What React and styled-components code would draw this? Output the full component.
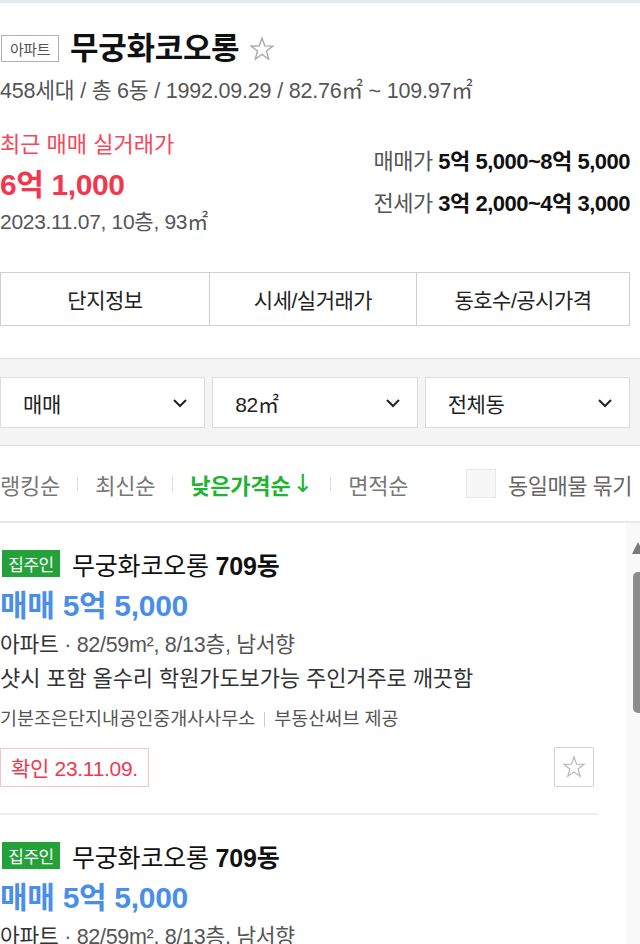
import React from 'react';
import styled, { createGlobalStyle } from 'styled-components';

const GlobalStyle = createGlobalStyle`
  html, body {
    margin: 0;
    padding: 0;
    overflow: hidden;
    background: #fff;
  }
  body {
    font-family: "Liberation Sans", "Noto Sans CJK KR", sans-serif;
    color: #222;
  }
  * { box-sizing: border-box; }
`;

const Page = styled.div`
  height: 944px;
  display: flex;
  flex-direction: column;
  overflow: hidden;
`;

const TopLine = styled.div`
  height: 3px;
  background: #e6e9ed;
  flex-shrink: 0;
`;

const Summary = styled.section`
  padding: 32px 10px 0 0;
  flex-shrink: 0;
`;

const TitleRow = styled.div`
  display: flex;
  align-items: center;
  height: 27px;
`;

const TypeBadge = styled.span`
  display: inline-flex;
  align-items: center;
  justify-content: center;
  height: 27px;
  width: 58px;
  margin-left: 1px;
  border: 1px solid #b0b0b0;
  font-size: 15px;
  color: #555;
  letter-spacing: -0.5px;
`;

const Title = styled.h1`
  margin: 0 0 0 11px;
  font-size: 31px;
  line-height: 34px;
  font-weight: 700;
  color: #111;
  letter-spacing: -0.3px;
`;

const StarButton = styled.span`
  display: inline-flex;
  margin-left: 10px;
  color: #aaa;
`;

const Meta = styled.p`
  margin: 17px 0 0;
  font-size: 21.5px;
  line-height: 24px;
  color: #555;
  letter-spacing: -0.2px;
`;

const PriceRow = styled.div`
  display: flex;
  justify-content: space-between;
  margin-top: 30px;
`;

const Recent = styled.div`
  display: flex;
  flex-direction: column;
`;

const RecentLabel = styled.span`
  font-size: 22px;
  line-height: 24px;
  color: #f5475c;
`;

const RecentPrice = styled.span`
  margin-top: 12px;
  font-size: 30px;
  line-height: 32px;
  font-weight: 700;
  color: #f0394f;
  letter-spacing: -0.4px;
`;

const RecentMeta = styled.span`
  margin-top: 9px;
  font-size: 21px;
  line-height: 24px;
  color: #555;
  letter-spacing: -0.3px;
`;

const Ranges = styled.div`
  display: flex;
  flex-direction: column;
  gap: 16px;
  padding-top: 16px;
`;

const RangeLine = styled.div`
  font-size: 22px;
  line-height: 26px;
  color: #555;
  letter-spacing: -0.5px;
  text-align: right;

  b {
    color: #111;
    font-weight: 700;
  }
`;

const Tabs = styled.nav`
  display: grid;
  grid-template-columns: 208px 207px 1fr;
  margin-top: 38px;
  border: 1px solid #cfcfcf;
`;

const Tab = styled.div`
  height: 52px;
  display: flex;
  align-items: center;
  justify-content: center;
  font-size: 21px;
  color: #222;
  letter-spacing: -0.5px;
  border-left: ${(p) => (p.$first ? 'none' : '1px solid #cfcfcf')};
`;

const FilterBand = styled.div`
  margin-top: 32px;
  padding: 18px 10px 17px 0;
  background: #f4f4f4;
  border-top: 1px solid #dedede;
  border-bottom: 1px solid #dedede;
  display: grid;
  grid-template-columns: 1fr 1fr 1fr;
  gap: 7px;
  flex-shrink: 0;
`;

const Select = styled.div`
  height: 51px;
  background: #fff;
  border: 1px solid #dcdcdc;
  display: flex;
  align-items: center;
  justify-content: space-between;
  padding: 0 16px 0 22px;
  font-size: 21px;
  color: #222;
  letter-spacing: -0.4px;
`;

const SortBar = styled.div`
  height: 77px;
  display: flex;
  align-items: center;
  border-bottom: 2px solid #e8e8e8;
  flex-shrink: 0;
`;

const SortItem = styled.span`
  display: inline-flex;
  align-items: center;
  font-size: 22px;
  color: ${(p) => (p.$active ? '#1cb430' : '#777')};
  font-weight: ${(p) => (p.$active ? 700 : 400)};
  letter-spacing: -0.2px;
`;

const SortArrow = styled.span`
  font-family: "DejaVu Sans", sans-serif;
  font-weight: 400;
  font-size: 25px;
  margin-left: 2px;
`;

const SortSep = styled.span`
  width: 1px;
  height: 16px;
  background: #ddd;
  margin: 0 17px;
`;

const Bundle = styled.label`
  margin-left: auto;
  margin-right: 8px;
  display: flex;
  align-items: center;
  gap: 12px;
  font-size: 22px;
  color: #666;
  letter-spacing: -0.5px;
`;

const CheckBox = styled.span`
  width: 30px;
  height: 29px;
  background: #f7f7f7;
  border: 1px solid #e6e6e6;
`;

const ListArea = styled.div`
  flex: 1;
  display: flex;
  overflow: hidden;
`;

const List = styled.div`
  flex: 1;
  padding-right: 28px;
`;

const Item = styled.article`
  padding: 27px 0 26px;
  border-bottom: 2px solid #eeeeee;
`;

const ItemHead = styled.div`
  display: flex;
  align-items: center;
  height: 27px;
`;

const OwnerBadge = styled.span`
  display: inline-flex;
  align-items: center;
  justify-content: center;
  height: 27px;
  width: 58px;
  margin-left: 2px;
  background: #23a23a;
  color: #fff;
  font-size: 17px;
  letter-spacing: -0.5px;
`;

const ItemTitle = styled.h2`
  margin: 0 0 0 12px;
  font-size: 25px;
  font-weight: 400;
  color: #111;
  letter-spacing: -0.2px;

  b { font-weight: 700; }
`;

const ItemPrice = styled.div`
  margin-top: 14px;
  font-size: 30px;
  line-height: 30px;
  font-weight: 700;
  color: #4a8fe7;
  letter-spacing: -0.3px;
`;

const Spec = styled.div`
  margin-top: 12px;
  font-size: 21.5px;
  line-height: 24px;
  color: #555;
  letter-spacing: -0.3px;

  strong { color: #333; font-weight: 400; }
`;

const Desc = styled.div`
  margin-top: 10px;
  font-size: 22px;
  line-height: 24px;
  color: #333;
  letter-spacing: -0.1px;
`;

const Agency = styled.div`
  margin-top: 17px;
  display: flex;
  align-items: center;
  font-size: 18.5px;
  line-height: 22px;
  color: #555;
`;

const AgencySep = styled.span`
  width: 1px;
  height: 15px;
  background: #ccc;
  margin: 0 9px;
`;

const ItemFoot = styled.div`
  margin-top: 17px;
  display: flex;
  justify-content: space-between;
  align-items: center;
`;

const Confirmed = styled.span`
  height: 39px;
  padding: 0 10px;
  display: inline-flex;
  align-items: center;
  border: 1px solid #f8c2c8;
  color: #f0394f;
  font-size: 21px;
  letter-spacing: -0.3px;
`;

const FavButton = styled.span`
  width: 40px;
  height: 40px;
  margin-right: 4px;
  border: 1px solid #d0d0d0;
  border-radius: 2px;
  display: flex;
  align-items: center;
  justify-content: center;
  color: #bbb;
`;

const ScrollTrack = styled.div`
  width: 14px;
  background: #f9f9f9;
  overflow: hidden;
  display: flex;
  flex-direction: column;
  align-items: flex-start;
`;

const ScrollArrow = styled.span`
  margin: 19px 0 0 6px;
  display: flex;
`;

const ScrollThumb = styled.span`
  margin: 18px 0 0 7px;
  width: 12px;
  height: 141px;
  background: #8c8c8c;
  border-radius: 5px;
`;

const Star = ({ size = 24 }) => (
  <svg width={size} height={size} viewBox="0 0 24 24" fill="none" stroke="currentColor" strokeWidth="1.3" strokeLinejoin="miter">
    <polygon points="12,2 14.6,9.1 22,9.3 16.1,13.9 18.2,21.3 12,17 5.8,21.3 7.9,13.9 2,9.3 9.4,9.1" />
  </svg>
);

const Chevron = () => (
  <svg width="16" height="16" viewBox="0 0 16 16" fill="none" stroke="#222" strokeWidth="2">
    <polyline points="2,5 8,11 14,5" />
  </svg>
);

const listings = [
  { id: 1 },
  { id: 2 },
];

function Listing() {
  return (
    <Item>
      <ItemHead>
        <OwnerBadge>집주인</OwnerBadge>
        <ItemTitle>무궁화코오롱 <b>709동</b></ItemTitle>
      </ItemHead>
      <ItemPrice>매매 5억 5,000</ItemPrice>
      <Spec><strong>아파트</strong> · 82/59m², 8/13층, 남서향</Spec>
      <Desc>샷시 포함 올수리 학원가도보가능 주인거주로 깨끗함</Desc>
      <Agency>
        기분조은단지내공인중개사사무소
        <AgencySep />
        부동산써브 제공
      </Agency>
      <ItemFoot>
        <Confirmed>확인 23.11.09.</Confirmed>
        <FavButton><Star size={24} /></FavButton>
      </ItemFoot>
    </Item>
  );
}

export default function App() {
  return (
    <Page>
      <GlobalStyle />
      <TopLine />
      <Summary>
        <TitleRow>
          <TypeBadge>아파트</TypeBadge>
          <Title>무궁화코오롱</Title>
          <StarButton><Star size={26} /></StarButton>
        </TitleRow>
        <Meta>458세대 / 총 6동 / 1992.09.29 / 82.76㎡ ~ 109.97㎡</Meta>
        <PriceRow>
          <Recent>
            <RecentLabel>최근 매매 실거래가</RecentLabel>
            <RecentPrice>6억 1,000</RecentPrice>
            <RecentMeta>2023.11.07, 10층, 93㎡</RecentMeta>
          </Recent>
          <Ranges>
            <RangeLine>매매가 <b>5억 5,000~8억 5,000</b></RangeLine>
            <RangeLine>전세가 <b>3억 2,000~4억 3,000</b></RangeLine>
          </Ranges>
        </PriceRow>
        <Tabs>
          <Tab $first>단지정보</Tab>
          <Tab>시세/실거래가</Tab>
          <Tab>동호수/공시가격</Tab>
        </Tabs>
      </Summary>
      <FilterBand>
        <Select>매매<Chevron /></Select>
        <Select>82㎡<Chevron /></Select>
        <Select>전체동<Chevron /></Select>
      </FilterBand>
      <SortBar>
        <SortItem>랭킹순</SortItem>
        <SortSep />
        <SortItem>최신순</SortItem>
        <SortSep />
        <SortItem $active>낮은가격순<SortArrow>↓</SortArrow></SortItem>
        <SortSep />
        <SortItem>면적순</SortItem>
        <Bundle>
          <CheckBox />
          동일매물 묶기
        </Bundle>
      </SortBar>
      <ListArea>
        <List>
          {listings.map((l) => (
            <Listing key={l.id} />
          ))}
        </List>
        <ScrollTrack>
          <ScrollArrow>
            <svg width="12" height="12" viewBox="0 0 12 12">
              <polygon points="6,0 12,12 0,12" fill="#7a7a7a" />
            </svg>
          </ScrollArrow>
          <ScrollThumb />
        </ScrollTrack>
      </ListArea>
    </Page>
  );
}
